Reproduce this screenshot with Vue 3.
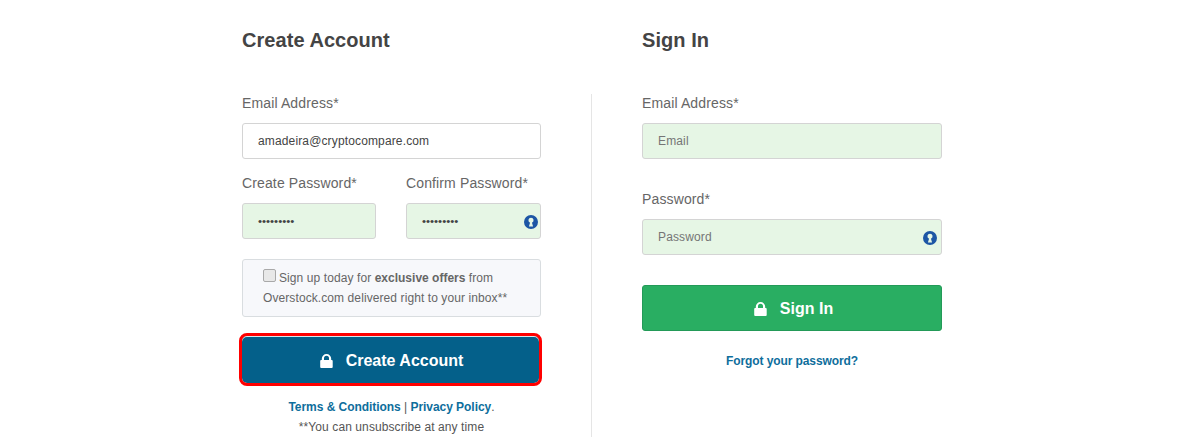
<script setup>
const KEYHOLE = 'M8 0a8 8 0 1 0 0 16A8 8 0 0 0 8 0zm0 3.2a2.9 2.9 0 0 1 1.1 5.6l1.3 4.2H5.6l1.3-4.2A2.9 2.9 0 0 1 8 3.2z'
const LOCK = 'M1.8 6V4.7a4.7 4.7 0 0 1 9.4 0V6h.6a.9.9 0 0 1 .9.9V13a1 1 0 0 1-1 1H1.2a1 1 0 0 1-1-1V6.9a.9.9 0 0 1 .9-.9h.7zM4 6h5V4.2a2.5 2.5 0 0 0-5 0V6z'
</script>

<template>
  <div class="page">
    <div class="titles">
      <h2 class="title title--create">Create Account</h2>
      <h2 class="title">Sign In</h2>
    </div>

    <div class="forms">
      <form class="form form--create" @submit.prevent>
        <label class="label">Email Address*</label>
        <div class="input">amadeira@cryptocompare.com</div>

        <div class="pair">
          <div class="pair__item">
            <label class="label">Create Password*</label>
            <div class="input input--green input--dots">•••••••••</div>
          </div>
          <div class="pair__item pair__item--wide">
            <label class="label">Confirm Password*</label>
            <div class="input input--green input--dots">
              •••••••••
              <svg class="key" viewBox="0 0 16 16"><path :d="KEYHOLE" fill-rule="evenodd" /></svg>
            </div>
          </div>
        </div>

        <div class="offer">
          <p class="offer__line"><span class="check"></span>Sign up today for <strong>exclusive offers</strong> from</p>
          <p class="offer__line">Overstock.com delivered right to your inbox**</p>
        </div>

        <button class="btn btn--blue" type="button">
          <svg class="lock" viewBox="0 0 13 14"><path :d="LOCK" fill-rule="evenodd" /></svg>
          Create Account
        </button>

        <p class="legal"><a class="link">Terms &amp; Conditions</a> | <a class="link">Privacy Policy</a>.</p>
        <p class="legal legal--note">**You can unsubscribe at any time</p>
      </form>

      <form class="form form--signin" @submit.prevent>
        <label class="label">Email Address*</label>
        <div class="input input--green input--ph">Email</div>

        <label class="label label--second">Password*</label>
        <div class="input input--green input--ph">
          Password
          <svg class="key key--signin" viewBox="0 0 16 16"><path :d="KEYHOLE" fill-rule="evenodd" /></svg>
        </div>

        <button class="btn btn--green" type="button">
          <svg class="lock" viewBox="0 0 13 14"><path :d="LOCK" fill-rule="evenodd" /></svg>
          Sign In
        </button>

        <p class="forgot"><a class="link">Forgot your password?</a></p>
      </form>
    </div>
  </div>
</template>

<style scoped>
.page {
  width: 700px;
  height: 443px;
  margin-left: 242px;
  font-family: "Liberation Sans", Arial, sans-serif;
  color: #666;
}

.titles {
  display: flex;
  height: 94px;
  padding-top: 28px;
  box-sizing: border-box;
}

.title {
  flex: 1;
  margin: 0;
  font-size: 20px;
  line-height: 24px;
  font-weight: 700;
  letter-spacing: 0.05px;
  color: #444;
}

.title--create {
  flex: 0 0 400px;
}

.forms {
  display: flex;
  height: 343px;
}

.form--create {
  width: 299px;
}

.form--signin {
  width: 351px;
  margin-left: 50px;
  padding-left: 50px;
  border-left: 1px solid #e5e5e5;
  box-sizing: border-box;
}

.label {
  display: block;
  height: 18px;
  font-size: 14px;
  line-height: 18px;
  letter-spacing: 0.13px;
  color: #666;
}

.label--second {
  margin-top: 31px;
}

.input {
  position: relative;
  height: 36px;
  margin-top: 11px;
  padding-left: 15px;
  box-sizing: border-box;
  border: 1px solid #d4d4d4;
  border-radius: 3px;
  background: #fff;
  font-size: 12px;
  line-height: 34px;
  letter-spacing: 0.14px;
  color: #444;
}

.input--green {
  background: #e6f6e5;
}

.input--ph {
  color: #757575;
}

.input--dots {
  font-size: 11.5px;
  letter-spacing: 0;
}

.key {
  position: absolute;
  right: 2px;
  top: 11px;
  width: 14px;
  height: 14px;
  fill: #1d56a5;
}

.key--signin {
  right: 4px;
}

.pair {
  display: flex;
  gap: 30px;
  margin-top: 15px;
}

.pair__item {
  width: 134px;
}

.pair__item--wide {
  width: 135px;
}

.offer {
  height: 58px;
  margin-top: 20px;
  padding: 8px 20px 0;
  box-sizing: border-box;
  border: 1px solid #d9dde0;
  border-radius: 3px;
  background: #f7f8fb;
}

.offer__line {
  margin: 0;
  font-size: 12px;
  line-height: 20px;
  letter-spacing: 0.09px;
  white-space: nowrap;
  color: #666;
}

.offer__line strong {
  letter-spacing: 0;
}

.check {
  display: inline-block;
  width: 11px;
  height: 11px;
  margin-right: 3px;
  border: 1px solid #a9a9a9;
  border-radius: 2px;
  background: #e8e8e8;
  vertical-align: 0;
}

.btn {
  display: flex;
  align-items: center;
  justify-content: center;
  gap: 13px;
  width: 100%;
  box-sizing: border-box;
  border-radius: 3px;
  padding: 1px 0 0 3px;
  font-family: inherit;
  font-size: 16px;
  font-weight: 700;
  color: #fff;
  cursor: pointer;
}

.btn--blue {
  width: 297px;
  height: 47px;
  margin-top: 19px;
  padding: 2px 0 0 2px;
  border: 0;
  border-radius: 5px;
  background: #04608a;
  outline: 3px solid #f00;
  box-shadow: inset 0 1px 0 rgba(255, 255, 255, 0.85);
}

.btn--green {
  height: 46px;
  margin-top: 30px;
  border: 1px solid #239a58;
  background: #29ae62;
}

.lock {
  width: 13px;
  height: 14px;
  fill: #fff;
}

.legal {
  margin: 14px 0 0;
  font-size: 12px;
  line-height: 20px;
  text-align: center;
  color: #555;
}

.legal--note {
  margin-top: 0;
  letter-spacing: 0.09px;
}

.link {
  font-weight: 700;
  letter-spacing: -0.05px;
  color: #0e6e9c;
}

.forgot {
  margin: 20px 0 0;
  font-size: 12px;
  line-height: 20px;
  text-align: center;
}

.forgot .link {
  letter-spacing: -0.1px;
}
</style>
